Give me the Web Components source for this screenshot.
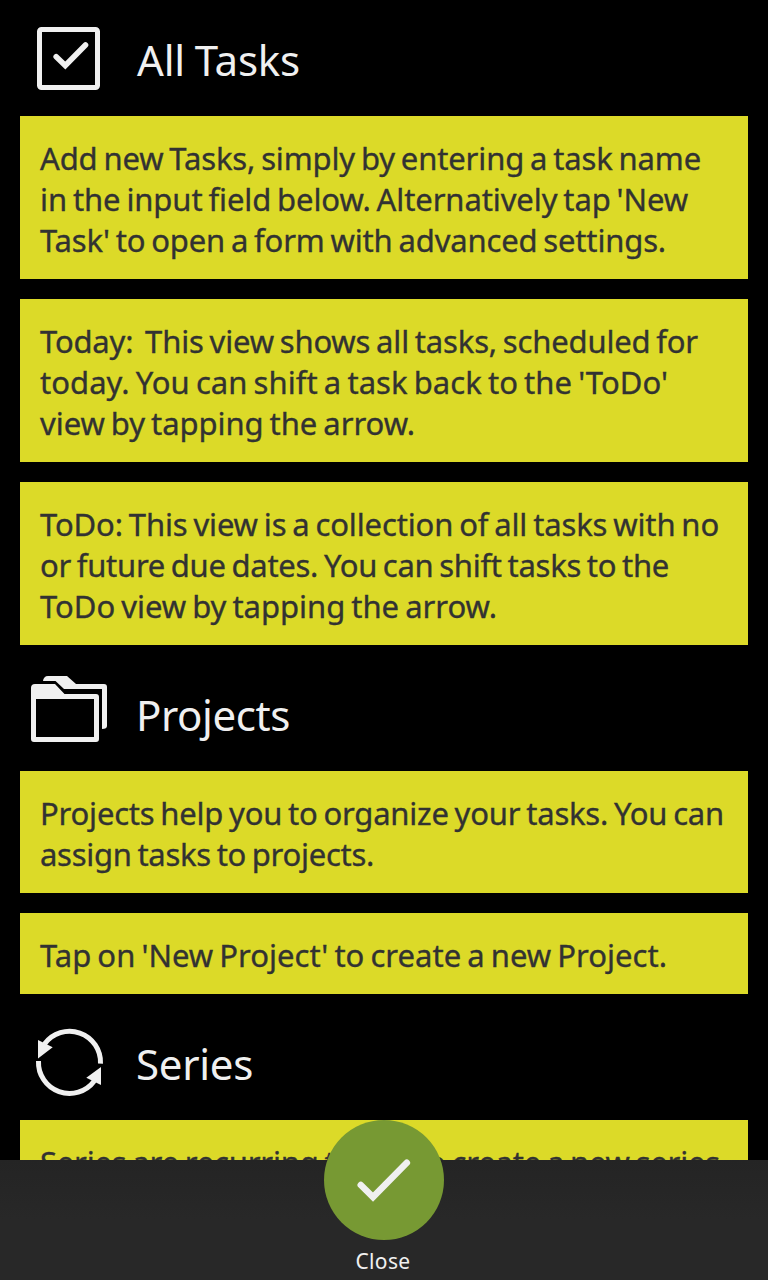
<!DOCTYPE html>
<html lang="en">
<head>
<meta charset="utf-8">
<title>Help</title>
<style>
html, body { margin: 0; height: 100%; background: #000; overflow: hidden; }
body { font-family: "Noto Sans", "Open Sans", sans-serif; color: #f0f0f0; }
</style>
</head>
<body>
<help-page>
  <help-heading icon="tasks"><text-line w="163">All Tasks</text-line></help-heading>
  <help-note><text-line w="661">Add new Tasks, simply by entering a task name</text-line><text-line w="648">in the input field below. Alternatively tap 'New</text-line><text-line w="626">Task' to open a form with advanced settings.</text-line></help-note>
  <help-note><text-line w="658">Today:&nbsp; This view shows all tasks, scheduled for</text-line><text-line w="628">today. You can shift a task back to the 'ToDo'</text-line><text-line w="375">view by tapping the arrow.</text-line></help-note>
  <help-note><text-line w="679">ToDo: This view is a collection of all tasks with no</text-line><text-line w="629">or future due dates. You can shift tasks to the</text-line><text-line w="457">ToDo view by tapping the arrow.</text-line></help-note>
  <help-heading icon="projects"><text-line w="154">Projects</text-line></help-heading>
  <help-note><text-line w="684">Projects help you to organize your tasks. You can</text-line><text-line w="334">assign tasks to projects.</text-line></help-note>
  <help-note><text-line w="627">Tap on 'New Project' to create a new Project.</text-line></help-note>
  <help-heading icon="series"><text-line w="117">Series</text-line></help-heading>
  <help-note><text-line w="680">Series are recurring tasks. To create a new series</text-line></help-note>
  <action-bar slot="bar"><text-line w="55">Close</text-line></action-bar>
</help-page>
<script>
class ShadowElement extends HTMLElement {
  constructor() {
    super();
    this.attachShadow({ mode: "open" }).innerHTML = this.render();
  }
  render() { return ""; }
}

customElements.define("help-page", class extends ShadowElement {
  render() {
    return `<style>
      :host { display: flex; flex-direction: column; width: 768px; height: 1280px; background: #000; }
      main { flex: 1; min-height: 0; overflow: hidden; display: flex; flex-direction: column; }
      ::slotted(*) { flex-shrink: 0; }
    </style><main><slot></slot></main><slot name="bar"></slot>`;
  }
});

customElements.define("help-note", class extends ShadowElement {
  render() {
    return `<style>
      :host { display: flex; flex-direction: column; align-items: flex-start; box-sizing: border-box;
        margin: 0 20px 20px; padding: 22px 20px 18px; background: #dcda28; color: #323232;
        font-size: 31px; line-height: 41px; word-spacing: -2px; -webkit-text-stroke: 0.35px #323232; }
    </style><slot></slot>`;
  }
});

const ICONS = {
  tasks: `<rect x="39.5" y="29.5" width="58" height="58" rx="2" fill="none" stroke="#f0f0f0" stroke-width="5"/>
    <path d="M56.2 56.7L65.3 65.5L85.5 45" fill="none" stroke="#f0f0f0" stroke-width="5.6" stroke-linecap="round"/>`,
  projects: `<path fill="#f0f0f0" d="M43 26C43.3 23 45 21 48 21H67L76 29H104Q107 29 107 32V71Q107 74 102 74V34H64L55.5 26Z"/>
    <path fill="#f0f0f0" fill-rule="evenodd" d="M31 33Q31 29 35 29H55L64.5 39H96Q99 39 99 42V84Q99 87 96 87H34Q31 87 31 84ZM36 44V82H94V44Z"/>`,
  series: `<g fill="none" stroke="#f0f0f0" stroke-width="5"><path d="M44.5 40A31 31 0 0 1 100.5 59.7"/>
    <path d="M38.5 57A31 31 0 0 0 94.3 77"/></g>
    <path fill="#f0f0f0" d="M38 36L52.7 43.3L38 54.5ZM101 63L86.3 73.7L101 81Z"/>`
};

customElements.define("help-heading", class extends ShadowElement {
  render() {
    return `<style>
      :host { display: flex; height: 116px; margin-top: -20px; padding-top: 10px; font-size: 42px; line-height: 58px; word-spacing: -1px; }
      :host([icon="tasks"]) { margin-top: 0; padding-top: 0; --label-x: 137px; }
      svg { width: 137px; height: 116px; flex: none; margin-right: calc(var(--label-x, 136px) - 137px); }
      div { padding-top: 31px; }
    </style><svg viewBox="0 0 137 116"></svg><div><slot></slot></div>`;
  }
  connectedCallback() {
    this.shadowRoot.querySelector("svg").innerHTML = ICONS[this.getAttribute("icon")];
  }
});

customElements.define("action-bar", class extends ShadowElement {
  render() {
    return `<style>
      :host { display: flex; justify-content: center; position: relative; height: 120px; flex: none;
        background: linear-gradient(#242424, #282828 50%, #282828); font-size: 21px; line-height: 30px; }
      button { all: unset; position: absolute; top: -40px; left: 324px; width: 120px; height: 120px; border-radius: 50%; background: #779933; }
      svg { display: block; }
      .label { padding: 86px 2px 0 0; }
    </style>
    <button aria-label="Close"><svg width="120" height="120" viewBox="0 0 120 120"><path d="M36.8 65L49 77L82.8 42.8" fill="none" stroke="#f0f0f0" stroke-width="6.6" stroke-linecap="round"/></svg></button>
    <div class="label"><slot></slot></div>`;
  }
});

/* One line of text, tracked so that its advance equals the w attribute. */
customElements.define("text-line", class extends ShadowElement {
  render() {
    return `<style>:host { display: block; width: max-content; white-space: nowrap; }</style><slot></slot>`;
  }
  connectedCallback() {
    const width = this.getBoundingClientRect().width;
    const gap = (Number(this.getAttribute("w")) - width) / this.textContent.length;
    this.style.letterSpacing = gap.toFixed(3) + "px";
  }
});
</script>
</body>
</html>
